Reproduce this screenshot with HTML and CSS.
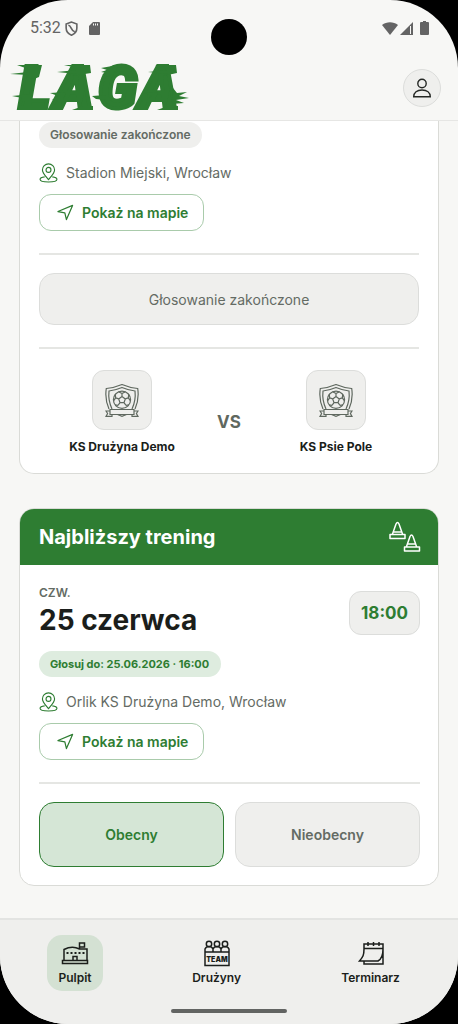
FILE: index.html
```html
<!DOCTYPE html>
<html lang="pl">
<head>
<meta charset="utf-8">
<meta name="viewport" content="width=device-width, initial-scale=1">
<title>LAGA</title>
<link rel="stylesheet" href="styles.css">
</head>
<body>
<svg class="sprite" aria-hidden="true">
  <symbol id="pin" viewBox="0 0 20 22">
    <path d="M10 17.500C7 13.800 3.600 10.600 3.600 7.300a6.400 6.400 0 0 1 12.800 0c0 3.300-3.400 6.500-6.400 10.200z"/>
    <circle cx="10" cy="7.200" r="2.600"/>
    <path d="M6 14.600c-3 .4-4.900 1.300-4.900 2.500 0 1.700 4 2.900 8.900 2.900s8.900-1.200 8.900-2.900c0-1.200-1.900-2.100-4.900-2.500"/>
  </symbol>
  <symbol id="arrow" viewBox="0 0 18 18">
    <path d="M1 8 16.500 1.500 10 16.500 8.300 9.300z"/>
  </symbol>
  <symbol id="crest" viewBox="0 0 34 34">
    <path d="M4 26C1 19 .2 12 1.300 5.500 7 5 12 3.600 17 1.500c5 2.100 10 3.500 15.700 4C33.800 12 33 19 30 26"/>
    <path d="M7 26C4.200 20 3.300 14 4 8c5-.6 9-1.800 13-3.500C21 6.200 25 7.400 30 8c.7 6-.2 12-3 18"/>
    <circle cx="17" cy="16.800" r="8.600"/>
    <path d="m17 13.500 3.300 2.400-1.300 3.800h-4l-1.300-3.800zM17 13.500v-3M20.300 15.900l3-1M19 19.700l2 2.700M15 19.700l-2 2.700M13.700 15.900l-3-1M17 10.500l-3.500-1.800M17 10.500l3.500-1.800M23.300 14.900l.5-4M23.300 14.900l2.200 3M21 22.400l3-.5M13 22.400l-3-.5M10.700 14.900l-.5-4M10.700 14.900l-2.200 3"/>
    <path class="crest-band" d="M5 26.500h24v5H5z"/>
    <path d="M5 28H1l1.600 2.500L1 33.400h6v-2M29 28h4l-1.600 2.500 1.600 2.900h-6v-2M12.500 31.500 17 33.300l4.500-1.800"/>
  </symbol>
</svg>

<div class="screen">
  <div class="status">
    <div class="status-group">
      <span>5:32</span>
      <svg class="status-shield" viewBox="0 0 12 14" aria-hidden="true"><path d="M6 1 1 2.800v3.700C1 9.800 3 12 6 13.200c3-1.200 5-3.400 5-6.700V2.800zM3 4c3 0 2 5 6 6"/></svg>
      <svg class="status-card" viewBox="0 0 11 13" aria-hidden="true"><path class="fill" d="M4 0h6a1 1 0 0 1 1 1v11a1 1 0 0 1-1 1H1a1 1 0 0 1-1-1V4z"/><path class="slots" d="M4.500 1.500v2M6.500 1.500v2M8.500 1.500v2"/></svg>
    </div>
    <div class="status-group status-right">
      <svg class="wifi" viewBox="0 0 16 13" aria-hidden="true"><path class="fill" d="M0 3C4.500-.8 11.500-.8 16 3L8 13z"/></svg>
      <svg class="signal" viewBox="0 0 13 13" aria-hidden="true"><path class="fill" d="M0 13 13 0v13z"/><path class="gap" d="M10.500 4v8"/></svg>
      <svg class="battery" viewBox="0 0 9 14" aria-hidden="true"><path class="fill" d="M3 0h3v1h2a1 1 0 0 1 1 1v11a1 1 0 0 1-1 1H1a1 1 0 0 1-1-1V2a1 1 0 0 1 1-1h2z"/></svg>
    </div>
    <span class="camera"></span>
  </div>

  <header class="header">
    <svg class="logo" viewBox="0 0 180 48" role="img" aria-label="LAGA">
      <text x="9 44 88 129" y="44">LAGA</text>
      <path d="M7 1h25l-3 12-5 2-8-2 3-2-19-1 18-2v-3zM2 32l20-2v7H10l2-3zM54 1h26l1 8-19 3 5-2-20-2 19-2-3-3zM40 29l16-1-3 8H42l6-4zM62 46l11-4h10v4zM91 4l17-3-2 6-8 6-6-2 5-2-6-1 6-2zM82 32l14-1v5l-10-1zM134 29l14-1-3 8h-8l5-4zM145 1h21l1 8-14 3 5-2-20-2 19-2-3-3zM147 46l11-4h10v4zM163 24l4 5 10-1-8 4 10 2-13 2 8 3-12 1z"/>
    </svg>
    <button class="profile" aria-label="Profil">
      <svg viewBox="0 0 20 20" aria-hidden="true"><circle cx="10" cy="5.500" r="4.200"/><path d="M1.700 18.700c0-4.200 3.400-6.700 8.300-6.700s8.300 2.500 8.300 6.700z"/></svg>
    </button>
  </header>

  <main class="content">
    <section class="card card-match">
      <span class="pill">Głosowanie zakończone</span>
      <p class="place"><svg aria-hidden="true"><use href="#pin"/></svg>Stadion Miejski, Wrocław</p>
      <button class="map"><svg aria-hidden="true"><use href="#arrow"/></svg>Pokaż na mapie</button>
      <hr>
      <button class="closed" disabled>Głosowanie zakończone</button>
      <hr>
      <div class="versus">
        <div class="team"><span class="badge"><svg aria-hidden="true"><use href="#crest"/></svg></span><strong>KS Drużyna Demo</strong></div>
        <span class="vs">VS</span>
        <div class="team"><span class="badge"><svg aria-hidden="true"><use href="#crest"/></svg></span><strong>KS Psie Pole</strong></div>
      </div>
    </section>

    <section class="card">
      <div class="card-title">
        <h2>Najbliższy trening</h2>
        <svg class="cones" viewBox="0 0 32 32" aria-hidden="true">
          <path d="M3.500 13 7 3q1.500-3 3 0l3.500 10M1 13.500h15v4H1zM4 11h9M17.500 25.500 21 15.500q1.500-3 3 0l3.500 10M15.500 26h15v4h-15zM18.500 23h8"/>
        </svg>
      </div>
      <div class="card-body">
        <div class="when">
          <div><span class="weekday">CZW.</span><h3>25 czerwca</h3></div>
          <time class="hour">18:00</time>
        </div>
        <span class="pill pill-open">Głosuj do: 25.06.2026 · 16:00</span>
        <p class="place"><svg aria-hidden="true"><use href="#pin"/></svg>Orlik KS Drużyna Demo, Wrocław</p>
        <button class="map"><svg aria-hidden="true"><use href="#arrow"/></svg>Pokaż na mapie</button>
        <hr>
        <div class="votes">
          <button class="vote vote-on" aria-pressed="true">Obecny</button>
          <button class="vote" aria-pressed="false">Nieobecny</button>
        </div>
      </div>
    </section>
  </main>

  <nav class="nav">
    <a class="tab tab-on" href="#pulpit" aria-current="page">
      <svg viewBox="0 0 28 28" aria-hidden="true"><path d="M3 20.500V9.500q8-4 15.500-.5H26v11.500M1.500 20.500h25v3h-25zM18.500 9V3h5v4h-5M12 20.500v-4h4v4"/><path class="dots" d="M5.500 13h18"/></svg>
      Pulpit
    </a>
    <a class="tab" href="#druzyny">
      <svg viewBox="0 0 28 28" aria-hidden="true"><circle cx="6" cy="4" r="2.700"/><circle cx="14" cy="4" r="2.700"/><circle cx="22" cy="4" r="2.700"/><path d="M2 12V9q1-2.500 4-2.500T10 9v3V9q1-2.500 4-2.500T18 9v3V9q1-2.500 4-2.500T26 9v3M2 12h24v13.500H2z"/><text x="14" y="22" text-anchor="middle">TEAM</text></svg>
      Drużyny
    </a>
    <a class="tab" href="#terminarz">
      <svg viewBox="0 0 28 28" aria-hidden="true"><path d="M7 9V4h19v20H7v-3M7 8.500h19M7 9c0 6-1 8-4.500 12H21c3.500-2 5-6 5-12M11 2v4M16.500 2v4M22 2v4"/></svg>
      Terminarz
    </a>
    <span class="home"></span>
  </nav>
</div>
</body>
</html>
```
FILE: styles.css
```css
* { box-sizing: border-box; }

body {
  margin: 0;
  background: #000;
  font-family: Inter, "Noto Sans", sans-serif;
  color: #1b1e1b;
}

button { font: inherit; margin: 0; }
h2, h3, p { margin: 0; }
svg { fill: none; stroke: currentColor; flex: none; }
.sprite { position: absolute; width: 0; height: 0; }

.screen {
  display: flex;
  flex-direction: column;
  height: 100vh;
  overflow: hidden;
  border-radius: 68px;
  background: #f7f7f5;
}

/* Status bar */
.status {
  position: relative;
  display: flex;
  justify-content: space-between;
  align-items: center;
  height: 56px;
  padding: 0 29px 0 30px;
  color: #646464;
  font: 16px/20px Roboto, sans-serif;
}
.status-group { display: flex; align-items: center; gap: 4px; }
.status .fill { fill: currentColor; stroke: none; }
.status-shield { width: 13px; height: 15px; stroke-width: 1.500; }
.status-card { width: 11px; height: 13px; margin-left: 7px; }
.slots, .gap { stroke: #f7f7f5; stroke-width: 1; }
.status-right { gap: 2px; }
.wifi { width: 16px; height: 13px; }
.signal { width: 13px; height: 13px; }
.battery { width: 9px; height: 14px; margin-left: 5px; }
.camera {
  position: absolute;
  top: 19px;
  left: calc(50% - 18px);
  width: 36px;
  height: 36px;
  border-radius: 50%;
  background: #000;
}

/* App header */
.header {
  display: flex;
  justify-content: space-between;
  align-items: center;
  height: 65px;
  padding: 0 17px 0 10px;
  border-bottom: 1px solid #e6e6e4;
}
.logo { width: 180px; height: 48px; fill: #2e7d32; stroke: none; overflow: visible; }
.logo text { font: italic 900 59px Roboto, sans-serif; stroke: #2e7d32; stroke-width: 4; }
.profile {
  display: grid;
  place-items: center;
  width: 38px;
  height: 38px;
  padding: 0;
  border: 1px solid #dcdddb;
  border-radius: 50%;
  background: #efefed;
  color: #252825;
}
.profile svg { width: 20px; height: 20px; stroke-width: 1.400; }

/* Cards */
.content {
  flex: 1;
  min-height: 0;
  display: flex;
  flex-direction: column;
  gap: 34px;
  padding: 0 19px;
  overflow: hidden;
}
.card {
  flex: none;
  overflow: hidden;
  border: 1px solid #dadbd7;
  border-radius: 15px;
  background: #fff;
}
.card-match {
  padding: 1px 19px 17px;
  border-top: 0;
  border-radius: 0 0 15px 15px;
}
.card-title {
  display: flex;
  justify-content: space-between;
  align-items: center;
  height: 56px;
  padding: 0 17px 0 19px;
  background: #2e7d32;
  color: #fff;
}
.card-title h2 { font-size: 20px; line-height: 24px; font-weight: 700; }
.cones { width: 32px; height: 32px; stroke-width: 1.500; stroke-linejoin: round; }
.card-body { padding: 18px 18px 18px 19px; }

.pill {
  display: table;
  padding: 0 11px;
  border-radius: 13px;
  background: #efefed;
  color: #646b64;
  font-size: 12px;
  line-height: 26px;
  font-weight: 600;
}
.pill-open { padding: 0 12px 0 11px; background: #deecdf; color: #2e7d32; font-size: 11px; font-weight: 700; }

.place {
  display: flex;
  align-items: center;
  gap: 8px;
  margin: 14px 0 10px;
  color: #646b64;
  font-size: 14px;
  line-height: 22px;
}
.place svg { width: 19px; height: 21px; color: #2e7d32; stroke-width: 1.200; }

.map {
  display: flex;
  align-items: center;
  gap: 8px;
  height: 37px;
  padding: 0 15px 0 17px;
  border: 1px solid #a9cbab;
  border-radius: 12px;
  background: #fff;
  color: #2e7d32;
  font-size: 14px;
  font-weight: 600;
}
.map svg { width: 17px; height: 17px; stroke-width: 1.300; stroke-linejoin: round; }

hr {
  height: 2px;
  margin: 22px 0 18px;
  border: 0;
  background: #e5e6e3;
}

.closed {
  display: block;
  width: 100%;
  height: 52px;
  border: 1px solid #dcdddb;
  border-radius: 15px;
  background: #efefed;
  color: #646b64;
  font-size: 14px;
}

.versus {
  display: grid;
  grid-template-columns: 1fr auto 1fr;
  align-items: center;
  gap: 12px;
  padding-top: 3px;
}
.team {
  display: flex;
  flex-direction: column;
  align-items: center;
  gap: 8px;
  font-size: 12px;
  line-height: 18px;
}
.team strong { font-weight: 700; }
.badge {
  display: grid;
  place-items: center;
  width: 60px;
  height: 60px;
  border: 1px solid #dcdddb;
  border-radius: 12px;
  background: #efefed;
  color: #5f685f;
}
.badge svg { width: 34px; height: 34px; stroke-width: 1.200; }
.crest-band { fill: #efefed; }
.vs { padding-top: 18px; color: #5f685f; font-size: 17px; line-height: 20px; font-weight: 700; }

.when { display: flex; justify-content: space-between; align-items: flex-end; margin-bottom: 14px; }
.weekday { display: block; color: #646b64; font-size: 12px; line-height: 20px; font-weight: 600; }
.when h3 { font-size: 28px; line-height: 34px; font-weight: 700; }
.hour {
  display: grid;
  place-items: center;
  height: 44px;
  margin-bottom: 2px;
  padding: 0 11px;
  border: 1px solid #dcdddb;
  border-radius: 12px;
  background: #efefed;
  color: #2e7d32;
  font-size: 17px;
  font-weight: 700;
}

.votes { display: grid; grid-template-columns: 1fr 1fr; gap: 11px; }
.vote {
  height: 65px;
  border: 1px solid #dcdddb;
  border-radius: 15px;
  background: #efefed;
  color: #646b64;
  font-size: 14px;
  font-weight: 600;
}
.vote-on { border-color: #2e7d32; background: #d5e6d6; color: #2e7d32; }

/* Bottom navigation */
.nav {
  position: relative;
  display: flex;
  justify-content: space-around;
  align-items: flex-start;
  height: 106px;
  padding: 15px 8px 0;
  border-top: 2px solid #e3e4e2;
  background: #efefed;
}
.tab {
  display: flex;
  flex-direction: column;
  align-items: center;
  gap: 1px;
  min-width: 56px;
  height: 56px;
  padding: 5px 11px;
  border-radius: 15px;
  color: #1b1e1b;
  font-size: 12px;
  line-height: 18px;
  font-weight: 600;
  text-decoration: none;
}
.tab-on { background: #d4e1d3; }
.tab svg { width: 28px; height: 28px; stroke-width: 1.500; }
.tab .dots { stroke-width: 2; stroke-dasharray: 2 2; }
.tab text { fill: currentColor; stroke: none; font: 900 7px Inter, sans-serif; }
.home {
  position: absolute;
  bottom: 11px;
  left: calc(50% - 58px);
  width: 116px;
  height: 4px;
  border-radius: 2px;
  background: #626462;
}
```
